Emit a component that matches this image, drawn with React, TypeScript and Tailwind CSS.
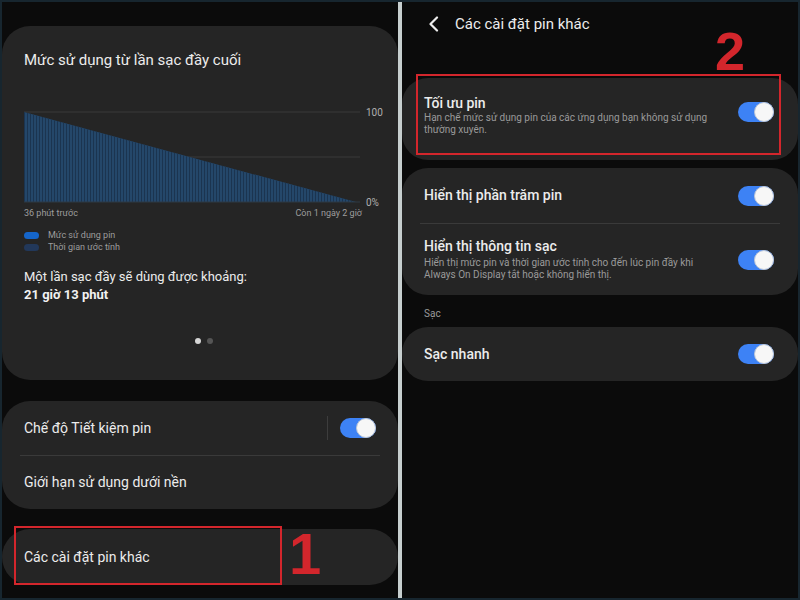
import React from 'react';

const Toggle: React.FC = () => (
  <div className="relative w-[36px] h-[20px] rounded-full bg-[#3d82f5] shrink-0">
    <div className="absolute right-0 top-0 w-[20px] h-[20px] rounded-full bg-[#f7f7f7] border border-[#b9c4d6]" />
  </div>
);

const UsageChart: React.FC = () => {
  const stripes = Array.from({ length: 110 }, (_, i) => i * 3);
  return (
    <svg width="360" height="104" viewBox="0 0 360 104" className="block">
      <defs>
        <clipPath id="tri">
          <polygon points="0,5 332,95 0,95" />
        </clipPath>
      </defs>
      <line x1="0" y1="5" x2="336" y2="5" stroke="#3a3a3a" strokeWidth="1" />
      <line x1="0" y1="50" x2="336" y2="50" stroke="#3a3a3a" strokeWidth="1" />
      <g clipPath="url(#tri)">
        <rect x="0" y="0" width="340" height="100" fill="#24476a" />
        {stripes.map((x) => (
          <rect key={x} x={x} y="0" width="1" height="100" fill="#1b3450" />
        ))}
      </g>
      <line x1="0" y1="95" x2="336" y2="95" stroke="#2f3a44" strokeWidth="1" />
      <text x="342" y="9" fill="#b0b0b0" fontSize="10" fontFamily="Roboto, sans-serif">100</text>
      <text x="342" y="99" fill="#b0b0b0" fontSize="10" fontFamily="Roboto, sans-serif">0%</text>
    </svg>
  );
};

const App: React.FC = () => {
  return (
    <div
      className="w-[800px] h-[600px] flex bg-[#17262f] p-[2px] overflow-hidden"
      style={{ fontFamily: 'Roboto, "Noto Sans", sans-serif' }}
    >
      {/* Left phone screen */}
      <div className="relative w-[396px] h-full bg-[#0b0b0b] overflow-hidden pt-[24px]">
        <div className="h-[354px] rounded-[28px] bg-[#252525] px-[22px] pt-[25px]">
          <h2 className="text-[15px] leading-[18px] text-[#ececec]">Mức sử dụng từ lần sạc đầy cuối</h2>
          <div className="mt-[38px]">
            <UsageChart />
          </div>
          <div className="flex justify-between w-[338px] text-[9px] leading-[12px] text-[#9d9d9d] -mt-[4px]">
            <span>36 phút trước</span>
            <span>Còn 1 ngày 2 giờ</span>
          </div>
          <div className="mt-[10px] flex flex-col text-[9px] leading-[12px] text-[#9d9d9d]">
            <div className="flex items-center gap-[9px]">
              <span className="w-[15px] h-[7px] rounded-full bg-[#1565c9]" />
              <span>Mức sử dụng pin</span>
            </div>
            <div className="flex items-center gap-[9px]">
              <span className="w-[15px] h-[7px] rounded-full bg-[#22385a]" />
              <span>Thời gian ước tính</span>
            </div>
          </div>
          <p className="mt-[15px] text-[13px] leading-[18px] text-[#ececec]">Một lần sạc đầy sẽ dùng được khoảng:</p>
          <p className="text-[13px] leading-[18px] font-bold text-[#f2f2f2]">21 giờ 13 phút</p>
          <div className="mt-[34px] flex justify-center gap-[6px] pl-[8px]">
            <span className="w-[6px] h-[6px] rounded-full bg-[#d6d6d6]" />
            <span className="w-[6px] h-[6px] rounded-full bg-[#555555]" />
          </div>
        </div>

        <div className="mt-[21px] rounded-[28px] bg-[#252525]">
          <div className="h-[54px] flex items-center justify-between pl-[22px] pr-[22px]">
            <span className="text-[14px] text-[#ececec]">Chế độ Tiết kiệm pin</span>
            <div className="flex items-center gap-[12px]">
              <span className="w-px h-[24px] bg-[#3d3d3d]" />
              <Toggle />
            </div>
          </div>
          <div className="mx-[18px] h-px bg-[#3a3a3a]" />
          <div className="h-[53px] flex items-center pl-[22px]">
            <span className="text-[14px] text-[#ececec]">Giới hạn sử dụng dưới nền</span>
          </div>
        </div>

        <div className="mt-[20px] h-[56px] rounded-[28px] bg-[#252525] flex items-center pl-[22px]">
          <span className="text-[14px] text-[#ececec]">Các cài đặt pin khác</span>
        </div>

        {/* annotation 1 */}
        <div className="absolute left-[12px] top-[524px] w-[268px] h-[59px] border-2 border-[#d3262c]" />
        <span
          className="absolute left-[287px] top-[517px] text-[58px] leading-[70px] font-bold text-[#d3262c]"
          style={{ fontFamily: '"Liberation Sans", Arial, sans-serif' }}
        >
          1
        </span>
      </div>

      {/* Divider */}
      <div className="w-[4px] h-full bg-[#c7cfcf]" />

      {/* Right phone screen */}
      <div className="relative flex-1 h-full bg-[#0b0b0b] overflow-hidden">
        <div className="h-[44px] flex items-center pl-[26px]">
          <svg width="12" height="16" viewBox="0 0 12 16" className="block">
            <path d="M9 1.5 L2.5 8 L9 14.5" stroke="#ededed" strokeWidth="2.2" fill="none" strokeLinecap="round" strokeLinejoin="round" />
          </svg>
          <span className="ml-[15px] text-[15px] text-[#ececec]">Các cài đặt pin khác</span>
        </div>

        <div className="mt-[32px] h-[82px] rounded-[26px] bg-[#252525] flex items-center justify-between pl-[22px] pr-[24px]">
          <div className="-mt-[9px]">
            <p className="text-[14px] leading-[18px] font-medium text-[#ececec]">Tối ưu pin</p>
            <p className="text-[10px] leading-[12px] text-[#9a9a9a] w-[300px]">
              Hạn chế mức sử dụng pin của các ứng dụng bạn không sử dụng thường xuyên.
            </p>
          </div>
          <div className="mb-[14px]">
            <Toggle />
          </div>
        </div>

        <div className="mt-[8px] rounded-[26px] bg-[#252525]">
          <div className="h-[55px] flex items-center justify-between pl-[22px] pr-[24px]">
            <span className="text-[14px] font-medium text-[#ececec]">Hiển thị phần trăm pin</span>
            <Toggle />
          </div>
          <div className="mx-[18px] h-px bg-[#3a3a3a]" />
          <div className="h-[71px] flex items-center justify-between pl-[22px] pr-[24px]">
            <div className="-mt-[2px]">
              <p className="text-[14px] leading-[18px] font-medium text-[#ececec]">Hiển thị thông tin sạc</p>
              <p className="mt-[2px] text-[10px] leading-[12px] text-[#9a9a9a] w-[300px]">
                Hiển thị mức pin và thời gian ước tính cho đến lúc pin đầy khi Always On Display tắt hoặc không hiển thị.
              </p>
            </div>
            <Toggle />
          </div>
        </div>

        <p className="mt-[12px] pl-[22px] text-[10px] leading-[14px] text-[#9a9a9a]">Sạc</p>

        <div className="mt-[6px] h-[54px] rounded-[26px] bg-[#252525] flex items-center justify-between pl-[22px] pr-[24px]">
          <span className="text-[14px] font-medium text-[#ececec]">Sạc nhanh</span>
          <Toggle />
        </div>

        {/* annotation 2 */}
        <div className="absolute left-[14px] top-[72px] w-[365px] h-[81px] border-2 border-[#d3262c]" />
        <span
          className="absolute left-[313px] top-[19px] text-[54px] leading-[60px] font-bold text-[#d3262c]"
          style={{ fontFamily: '"Liberation Sans", Arial, sans-serif' }}
        >
          2
        </span>
      </div>
    </div>
  );
};

export default App;
